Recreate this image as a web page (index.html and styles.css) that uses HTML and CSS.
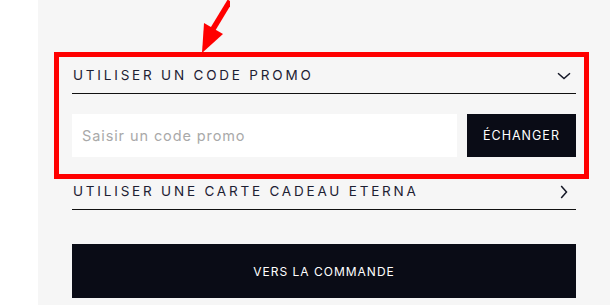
FILE: index.html
```html
<!DOCTYPE html>
<html lang="fr">
<head>
<meta charset="utf-8">
<title>Panier</title>
<link rel="stylesheet" href="styles.css">
</head>
<body>
<div class="page">
  <div class="side"></div>
  <main class="main">
    <div class="content">
      <div class="acc-header">
        <span class="acc-title">UTILISER UN CODE PROMO</span>
        <svg class="chev-down" width="14" height="8" viewBox="0 0 14 8"><path d="M1 1.2 L7 6.5 L13 1.2" fill="none" stroke="#141726" stroke-width="1.5"/></svg>
      </div>
      <div class="promo-row">
        <input class="promo-input" type="text" placeholder="Saisir un code promo">
        <button class="btn-exchange">ÉCHANGER</button>
      </div>
      <div class="acc-header acc-gift">
        <span class="acc-title">UTILISER UNE CARTE CADEAU ETERNA</span>
        <svg class="chev-right" width="8" height="14" viewBox="0 0 8 14"><path d="M1.2 1 L6.5 7 L1.2 13" fill="none" stroke="#141726" stroke-width="1.5"/></svg>
      </div>
      <button class="btn-order">VERS LA COMMANDE</button>
    </div>
  </main>
  <div class="highlight"></div>
  <svg class="arrow" width="40" height="56" viewBox="0 0 40 56">
    <line x1="40" y1="1" x2="23" y2="29" stroke="#ff0000" stroke-width="5.5"/>
    <polygon points="14,23 33,34 12,53" fill="#ff0000"/>
  </svg>
</div>
</body>
</html>
```
FILE: styles.css
```css
* { box-sizing: border-box; }
html, body { margin: 0; padding: 0; }
body {
  width: 610px;
  height: 305px;
  overflow: hidden;
  font-family: "Inter", "DejaVu Sans", sans-serif;
  background: #ffffff;
}
.page {
  position: relative;
  display: flex;
  height: 305px;
}
.side {
  width: 38px;
  flex: none;
  background: #ffffff;
}
.main {
  flex: 1;
  background: #f6f6f6;
  padding: 65px 0 0 34px;
}
.content {
  width: 504px;
  display: flex;
  flex-direction: column;
}
.acc-header {
  display: flex;
  align-items: center;
  justify-content: space-between;
  border-bottom: 1px solid #111111;
  padding: 0 6px 8px 1px;
  line-height: 20px;
  height: 29px;
}
.acc-title {
  font-size: 13.5px;
  letter-spacing: 2.8px;
  color: #1d2033;
  font-weight: 400;
}
.chev-down { margin-top: 1px; margin-right: -1px; }
.chev-right { margin-top: 2px; margin-right: 2px; }
.promo-row {
  display: flex;
  gap: 10px;
  margin-top: 20px;
  height: 43px;
}
.promo-input {
  flex: none;
  width: 385px;
  height: 43px;
  border: none;
  background: #ffffff;
  padding: 0 10px;
  font-family: "Inter", "DejaVu Sans", sans-serif;
  font-size: 14.5px;
  letter-spacing: 0.9px;
  color: #333;
  outline: none;
}
.promo-input::placeholder { color: #a9a9a9; }
.btn-exchange {
  flex: none;
  width: 109px;
  height: 43px;
  border: none;
  background: #0a0c16;
  color: #ffffff;
  font-family: "Inter", "DejaVu Sans", sans-serif;
  font-size: 12.5px;
  letter-spacing: 1px;
  font-weight: 400;
}
.acc-gift { margin-top: 24px; }
.btn-order {
  margin-top: 34px;
  width: 504px;
  height: 54px;
  border: none;
  background: #0a0c16;
  color: #ffffff;
  font-family: "Inter", "DejaVu Sans", sans-serif;
  font-size: 12px;
  letter-spacing: 1px;
  font-weight: 400;
}
.highlight {
  position: absolute;
  left: 54px;
  top: 52px;
  width: 535px;
  height: 127px;
  border: 5px solid #ff0000;
  pointer-events: none;
}
.arrow {
  position: absolute;
  left: 190px;
  top: 0;
}
```
